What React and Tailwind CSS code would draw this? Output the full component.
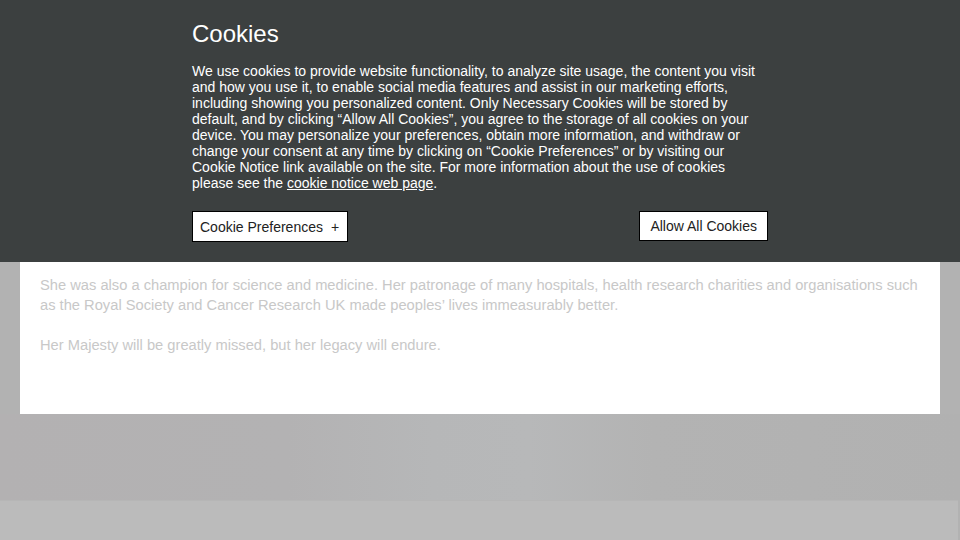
export default function App() {
  return (
    <div className="relative w-[960px] h-[540px] overflow-hidden bg-[#b2b2b2]" style={{ fontFamily: '"Liberation Sans", Arial, sans-serif' }}>
      <div className="bg-[#3c4040] h-[262px]">
        <div className="w-[576px] mx-auto pt-[19px]">
          <h1 className="text-white text-[24px] leading-[30px]">Cookies</h1>
          <p className="mt-[14px] text-white text-[14px] leading-[16px]">
            We use cookies to provide website functionality, to analyze site usage, the content you visit and how you use it, to enable social media features and assist in our marketing efforts, including showing you personalized content. Only Necessary Cookies will be stored by default, and by clicking “Allow All Cookies”, you agree to the storage of all cookies on your device. You may personalize your preferences, obtain more information, and withdraw or change your consent at any time by clicking on “Cookie Preferences” or by visiting our Cookie Notice link available on the site. For more information about the use of cookies please see the <a className="underline">cookie notice web page</a>.
          </p>
          <div className="mt-[20px] flex justify-between items-start">
            <button className="h-[31px] pl-[7px] pr-[8px] pt-[2px] bg-white border border-black text-[#222] text-[14px] flex items-center gap-[8px]">
              <span>Cookie Preferences</span>
              <span>+</span>
            </button>
            <button className="h-[30px] px-[10px] bg-white border border-black text-[#222] text-[14px]">Allow All Cookies</button>
          </div>
        </div>
      </div>
      <div className="mx-[20px] bg-white h-[152px] px-[20px] pt-[13px] text-[#c8c8c8] text-[14.7px] leading-[20px]">
        <p>She was also a champion for science and medicine. Her patronage of many hospitals, health research charities and organisations such as the Royal Society and Cancer Research UK made peoples’ lives immeasurably better.</p>
        <p className="mt-[20px]">Her Majesty will be greatly missed, but her legacy will endure.</p>
      </div>
      <div className="h-[86px] bg-[linear-gradient(90deg,#b3b1b2_0%,#b3b2b3_30%,#b6b7b8_45%,#b7b8b9_55%,#b3b3b3_68%,#b1b1b1_100%)]"></div>
      <div className="h-[40px] bg-[#bbbbbb] border-t border-[#b6b6b6] mr-[2px]"></div>
    </div>
  );
}
